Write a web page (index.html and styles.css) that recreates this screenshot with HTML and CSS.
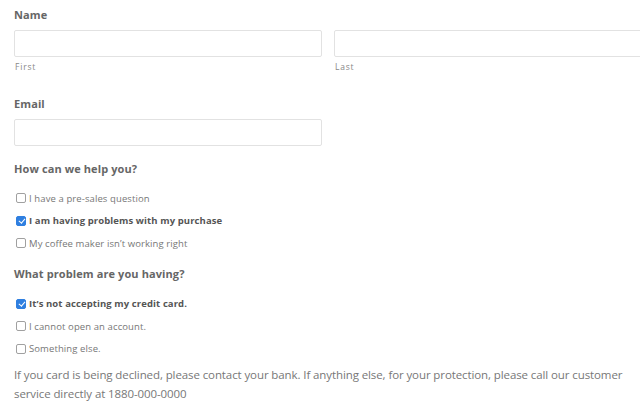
FILE: index.html
```html
<!DOCTYPE html>
<html>
<head>
<meta charset="utf-8">
<link rel="stylesheet" href="styles.css">
</head>
<body>
<form class="form">
  <div class="group name-group">
    <div class="label">Name</div>
    <div class="name-row">
      <div class="sub">
        <input class="input" type="text">
        <div class="sublabel">First</div>
      </div>
      <div class="sub">
        <input class="input" type="text">
        <div class="sublabel">Last</div>
      </div>
    </div>
  </div>
  <div class="group email-group">
    <div class="label">Email</div>
    <input class="input email" type="text">
  </div>
  <div class="group checks-group">
    <div class="label">How can we help you?</div>
    <ul class="checks">
      <li><label class="check"><input type="checkbox" class="box"><span>I have a pre-sales question</span></label></li>
      <li><label class="check on"><input type="checkbox" class="box" checked><span>I am having problems with my purchase</span></label></li>
      <li><label class="check"><input type="checkbox" class="box"><span>My coffee maker isn’t working right</span></label></li>
    </ul>
  </div>
  <div class="group checks-group second">
    <div class="label">What problem are you having?</div>
    <ul class="checks">
      <li><label class="check on"><input type="checkbox" class="box" checked><span>It’s not accepting my credit card.</span></label></li>
      <li><label class="check"><input type="checkbox" class="box"><span>I cannot open an account.</span></label></li>
      <li><label class="check"><input type="checkbox" class="box"><span>Something else.</span></label></li>
    </ul>
  </div>
  <p class="note">If you card is being declined, please contact your bank. If anything else, for your protection, please call our customer service directly at 1880-000-0000</p>
</form>
</body>
</html>
```
FILE: styles.css
```css
html, body {
  margin: 0;
  padding: 0;
  background: #fff;
}
body {
  font-family: "Open Sans", "Liberation Sans", sans-serif;
  color: #6f6f6f;
  overflow: hidden;
  width: 640px;
}
.form {
  padding: 7px 0 0 14px;
}
.label {
  font-size: 11px;
  font-weight: 700;
  color: #666;
  line-height: 16px;
  letter-spacing: 0.1px;
}
.name-row {
  display: grid;
  grid-template-columns: 308px 308px;
  column-gap: 12px;
  margin-top: 7px;
}
.input {
  display: block;
  box-sizing: border-box;
  width: 308px;
  height: 27px;
  border: 1px solid #e2e2e2;
  border-radius: 2px;
  background: #fff;
  margin: 0;
  padding: 0;
}
.sublabel {
  font-size: 8.5px;
  color: #888;
  line-height: 12px;
  margin-top: 4px;
  margin-left: 1px;
  letter-spacing: 0.8px;
}
.email-group {
  margin-top: 23px;
}
.email-group .input {
  margin-top: 7px;
}
.checks-group {
  margin-top: 15px;
}
.checks-group.second {
  margin-top: 11px;
}
.checks {
  list-style: none;
  margin: 10px 0 0;
  padding: 0;
}
.second .checks {
  margin-top: 11px;
}
.checks li {
  height: 22.5px;
  display: flex;
  align-items: center;
}
.check {
  display: flex;
  align-items: center;
  font-size: 9.5px;
  color: #777;
  letter-spacing: 0.1px;
}
.check.on {
  font-weight: 700;
  color: #555;
}
.box {
  appearance: none;
  -webkit-appearance: none;
  box-sizing: border-box;
  width: 10px;
  height: 10px;
  margin: 0 3px 0 2px;
  border: 1px solid #a0a0a0;
  border-radius: 2px;
  background: #fff;
  position: relative;
}
.box:checked {
  background: #2f7fe0;
  border-color: #2f7fe0;
}
.box:checked::after {
  content: "";
  position: absolute;
  left: 2.5px;
  top: 0.4px;
  width: 2.5px;
  height: 5px;
  border: solid #fff;
  border-width: 0 1.5px 1.5px 0;
  transform: rotate(40deg);
}
.note {
  margin: 5px 0 0;
  font-size: 11.5px;
  line-height: 19px;
  color: #777;
  width: 622px;
  letter-spacing: -0.1px;
}
```
